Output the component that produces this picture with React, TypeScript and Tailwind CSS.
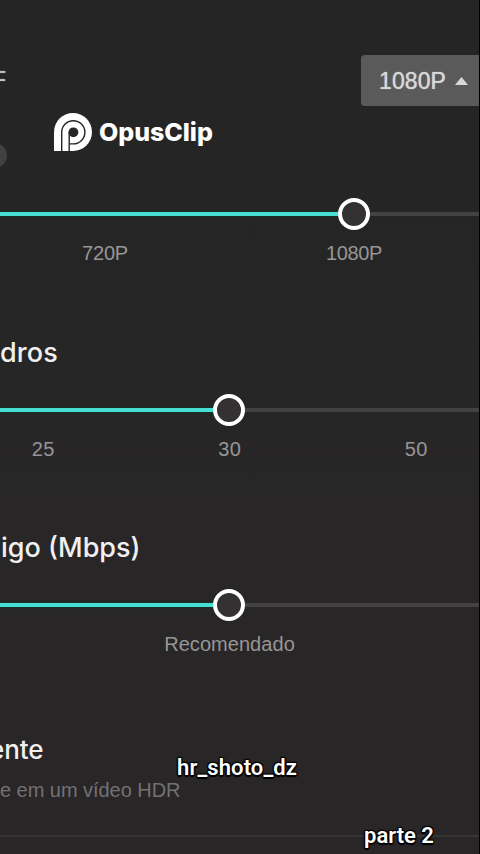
const ui = "font-['Liberation_Sans',Arial,sans-serif]";

type Label = { text: string; className: string };

function Slider({
  fill,
  scale,
  labels,
}: {
  fill: string;
  scale: string;
  labels: Label[];
}) {
  return (
    <div>
      <div className="flex h-8 items-center">
        <div className={`h-1 shrink-0 bg-[#46dfd1] shadow-[0_0_1px_1px_#17302e] ${fill}`} />
        <div className="size-8 shrink-0 rounded-full border-[4px] border-white bg-[#343132]" />
        <div className="h-1 flex-1 bg-[#434142]" />
      </div>
      <div className={`mt-[11px] flex h-6 items-center text-[20px] leading-6 text-[#979596] ${scale}`}>
        {labels.map((l) => (
          <div key={l.text} className="w-full shrink-0 basis-[var(--step)] text-center">
            <span className={l.className}>{l.text}</span>
          </div>
        ))}
      </div>
    </div>
  );
}

function Logo() {
  return (
    <div className="flex items-center gap-[7px]">
      <svg width="38" height="38" viewBox="0 0 38 38" fill="none">
        <path d="M0 38V19a19 19 0 1 1 19 19Z" fill="#fff" />
        <path d="M7.7 38V19.3a11.6 11.6 0 1 1 11.6 11.6h-3.6" stroke="#252525" strokeWidth="1.4" />
        <path d="M15.2 38V19" stroke="#252525" strokeWidth="1.4" />
        <circle cx="19.4" cy="19.3" r="4.9" fill="#252525" />
      </svg>
      <span className="font-[Inter,sans-serif] text-[25px] leading-[30px] font-extrabold tracking-[-0.05px] text-white">
        OpusClip
      </span>
    </div>
  );
}

const outline =
  "[text-shadow:-1px_-1px_1px_#000,1px_-1px_1px_#000,-1px_1px_1px_#000,1px_1px_1px_#000,0_2px_1px_#000]";

export default function App() {
  return (
    <main
      className={`relative h-[854px] w-[480px] overflow-hidden border-r border-black bg-linear-to-b from-[#252525] from-20% to-[#282627] to-60% ${ui}`}
    >
      <header className="flex h-[106px] items-end justify-between">
        <div className="flex h-[51px] w-[6px] items-center justify-end overflow-hidden text-[23px] text-[#c4c4c4] [text-shadow:0_0_1px_#c4c4c4]">
          F
        </div>
        <button className="flex h-[51px] w-[118px] items-center gap-[9px] rounded-l-[4px] bg-[#5a5a5a] pl-[18px] text-[#d8d8d8]">
          <span className="pt-px text-[23px] tracking-[0.1px] [text-shadow:0_0_1px_#d8d8d8]">1080P</span>
          <svg className="shrink-0" width="13" height="8" viewBox="0 0 13 8">
            <path d="M6.5 0 13 8H0Z" fill="currentColor" />
          </svg>
        </button>
      </header>

      <div className="flex h-[92px] pt-[7px]">
        <div className="mt-[30px] -ml-[18px] size-[25px] rounded-full bg-[#414141]" />
        <div className="ml-[47px]">
          <Logo />
        </div>
      </div>

      <Slider
        fill="w-[338px]"
        scale="-ml-[19.5px] [--step:249px]"
        labels={[
          { text: "720P", className: "tracking-[-0.2px]" },
          { text: "1080P", className: "tracking-[-0.4px]" },
        ]}
      />

      <h2 className="mt-[72px] h-8 text-[27px] leading-8 font-medium text-[#f1eff0]">
        <span className="font-[Inter,sans-serif] tracking-[0.1px]">dros</span>
      </h2>
      <div className="mt-[25px]">
        <Slider
          fill="w-[213px]"
          scale="-ml-[50px] [--step:186.5px]"
          labels={[
            { text: "25", className: "tracking-[0.3px]" },
            { text: "30", className: "tracking-[0.3px]" },
            { text: "50", className: "tracking-[0.3px]" },
          ]}
        />
      </div>

      <h2 className="mt-[71px] h-8 pl-px text-[27px] leading-8 font-medium text-[#f1eff0]">
        <span className="font-[Inter,sans-serif]">igo (Mbps)</span>
      </h2>
      <div className="mt-[25px]">
        <Slider
          fill="w-[213px]"
          scale="[--step:459px]"
          labels={[{ text: "Recomendado", className: "tracking-[0.05px]" }]}
        />
      </div>

      <section className="mt-[78px] h-[103px] border-b-2 border-[#363435]">
        <h2 className="-ml-[11px] h-8 text-[26px] leading-8 font-medium text-[#f1eff0]">
          <span className="font-[Inter,sans-serif] tracking-[-0.1px]">ente</span>
        </h2>
        <p className="mt-[12px] text-[20px] leading-6 tracking-[-0.04px] text-[#737172]">e em um vídeo HDR</p>
      </section>

      {/* captions laid over the video frame */}
      <div
        className={`absolute top-[754px] left-[177px] font-[Roboto,sans-serif] text-[22px] leading-7 font-semibold tracking-[0.1px] whitespace-nowrap text-white ${outline}`}
      >
        hr_shoto_dz
      </div>
      <div
        className={`absolute top-[822px] left-[364px] font-[Roboto,sans-serif] text-[22px] leading-7 font-semibold whitespace-nowrap text-white ${outline}`}
      >
        parte 2
      </div>
    </main>
  );
}
